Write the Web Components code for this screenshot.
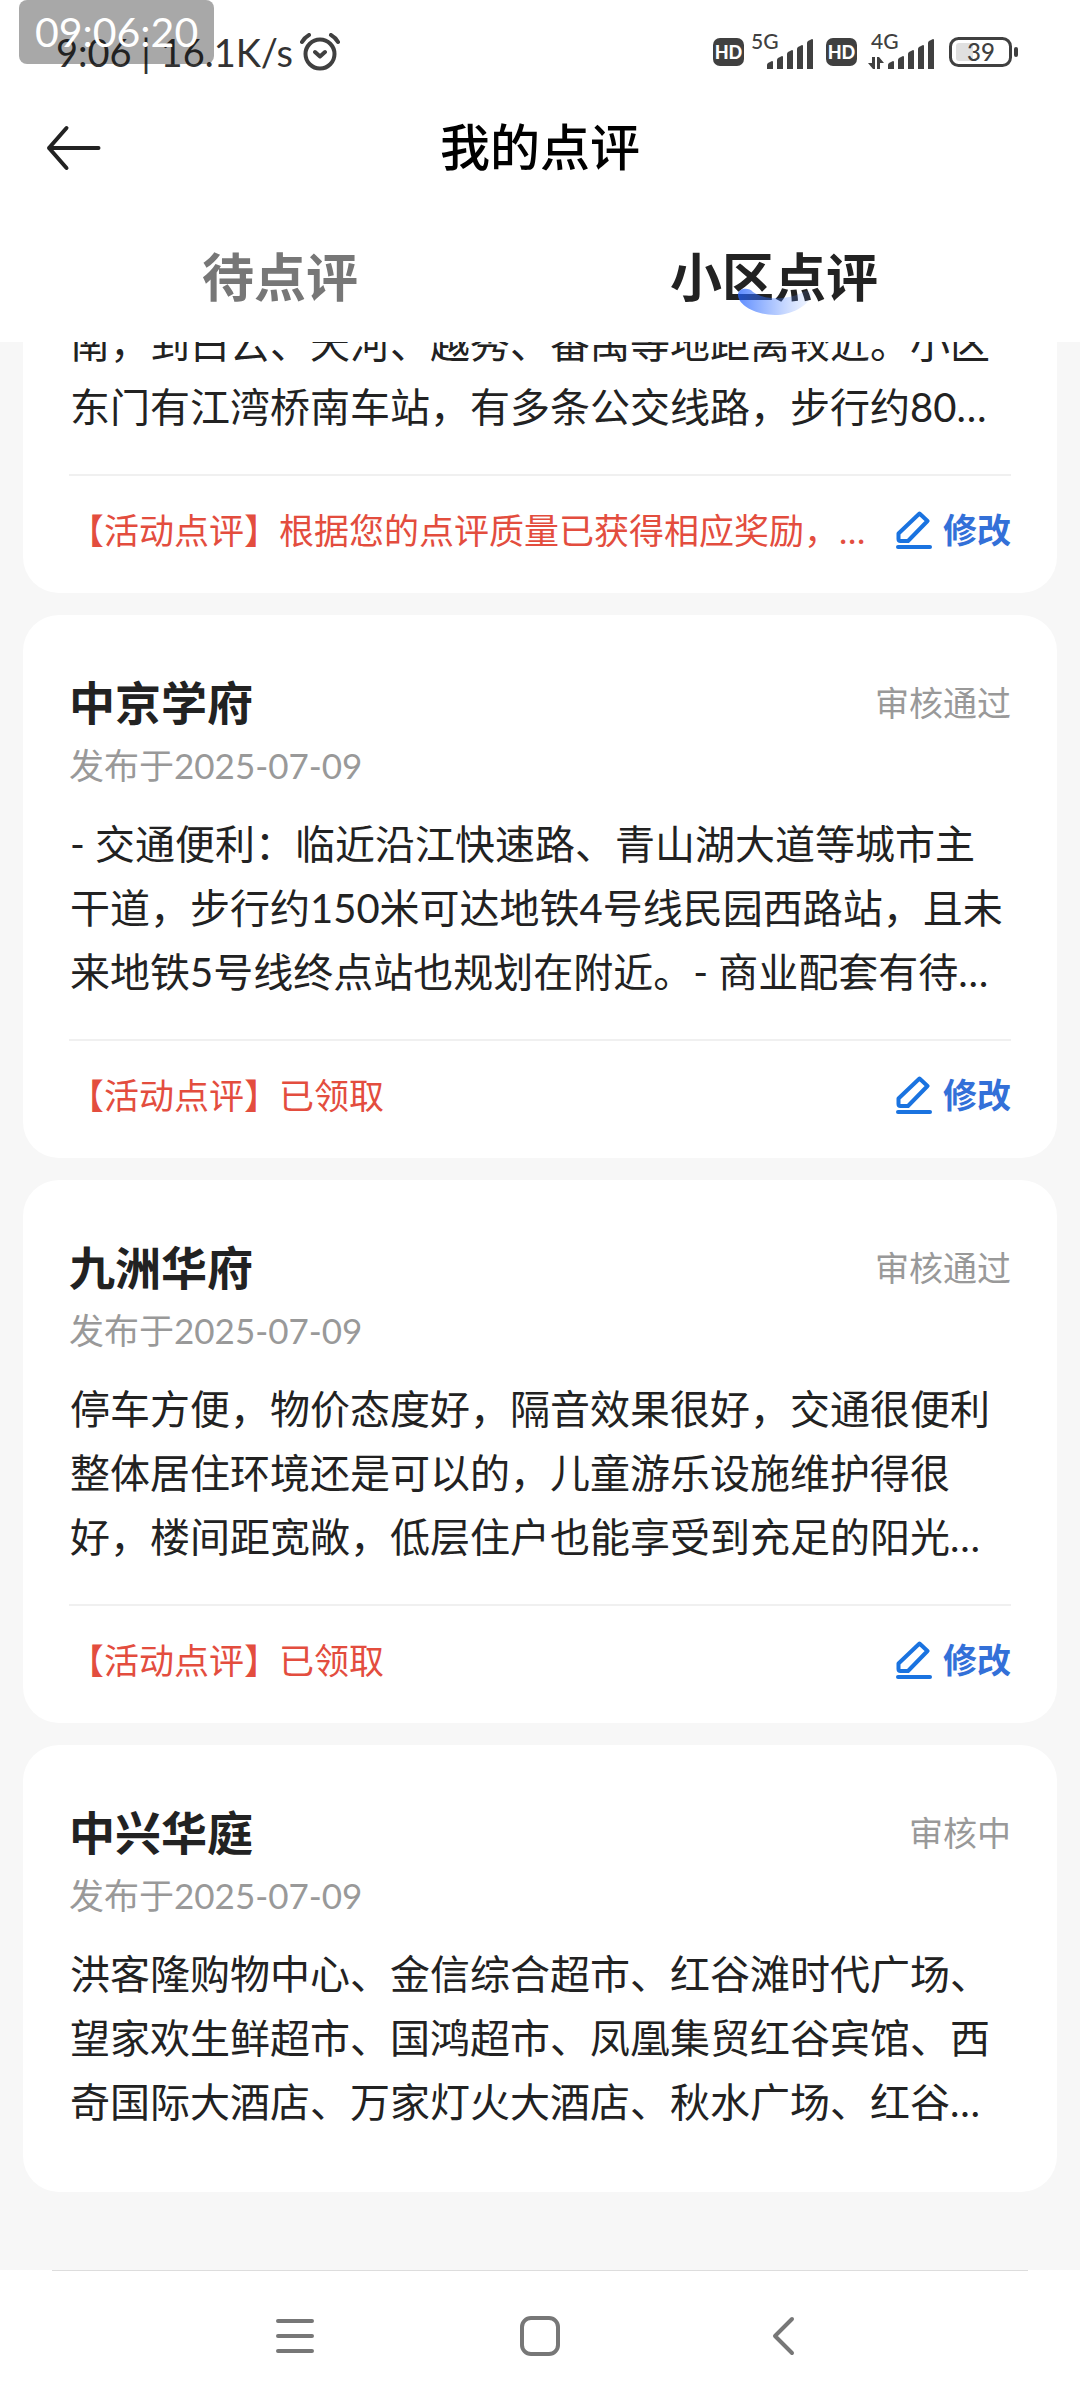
<!DOCTYPE html>
<html lang="zh-CN">
<head>
<meta charset="utf-8">
<meta name="viewport" content="width=device-width, initial-scale=1">
<title>我的点评</title>
<style>
  html, body { margin: 0; }
  body {
    background: #fff;
    color: #222;
    font-family: Lato, "Noto Sans CJK SC", sans-serif;
  }
</style>
</head>
<body>
<app-shell>
  <status-bar slot="header" time="9:06" speed="16.1K/s" battery="39"></status-bar>
  <title-bar slot="header">我的点评</title-bar>
  <tab-strip slot="header">
    <tab-item>待点评</tab-item>
    <tab-item selected>小区点评</tab-item>
  </tab-strip>

  <review-card continued editable>
    南，到白云、天河、越秀、番禺等地距离较近。小区东门有江湾桥南车站，有多条公交线路，步行约80…
    <span slot="notice">【活动点评】根据您的点评质量已获得相应奖励，…</span>
  </review-card>

  <review-card editable>
    <span slot="name">中京学府</span>
    <span slot="status">审核通过</span>
    <time slot="date" datetime="2025-07-09">发布于2025-07-09</time>
    - 交通便利：临近沿江快速路、青山湖大道等城市主干道，步行约150米可达地铁4号线民园西路站，且未来地铁5号线终点站也规划在附近。- 商业配套有待…
    <span slot="notice">【活动点评】已领取</span>
  </review-card>

  <review-card editable>
    <span slot="name">九洲华府</span>
    <span slot="status">审核通过</span>
    <time slot="date" datetime="2025-07-09">发布于2025-07-09</time>
    停车方便，物价态度好，隔音效果很好，交通很便利整体居住环境还是可以的，儿童游乐设施维护得很好，楼间距宽敞，低层住户也能享受到充足的阳光…
    <span slot="notice">【活动点评】已领取</span>
  </review-card>

  <review-card>
    <span slot="name">中兴华庭</span>
    <span slot="status">审核中</span>
    <time slot="date" datetime="2025-07-09">发布于2025-07-09</time>
    洪客隆购物中心、金信综合超市、红谷滩时代广场、望家欢生鲜超市、国鸿超市、凤凰集贸红谷宾馆、西奇国际大酒店、万家灯火大酒店、秋水广场、红谷…
  </review-card>

  <system-nav slot="footer"></system-nav>
  <clock-overlay slot="overlay">09:06:20</clock-overlay>
</app-shell>

<script>
const define = (name, render) => customElements.define(name, class extends HTMLElement {
  constructor() {
    super();
    this.attachShadow({ mode: 'open' });
  }
  connectedCallback() {
    this.shadowRoot.innerHTML = render(this);
  }
});

const buttonReset = `
  button {
    margin: 0; padding: 0; border: 0; background: none;
    font: inherit; color: inherit; cursor: pointer;
  }
  svg { display: block; }
`;

/* Page frame: fixed header and footer, list scrolled to its end between them */
define('app-shell', () => `
  <style>
    :host { display: flex; flex-direction: column; height: 100vh; position: relative; background: #fff; }
    header, footer { flex: none; background: #fff; }
    main {
      flex: 1; min-height: 0; overflow: hidden;
      display: flex; flex-direction: column; justify-content: flex-end; gap: 22px;
      padding: 0 23px 78px; background: #f7f7f7;
    }
  </style>
  <header><slot name="header"></slot></header>
  <main><slot></slot></main>
  <footer><slot name="footer"></slot></footer>
  <slot name="overlay"></slot>
`);

define('clock-overlay', () => `
  <style>
    :host {
      position: absolute; top: 0; left: 19px; padding: 0 16px;
      border-radius: 8px; background: rgba(0, 0, 0, .34); color: #fff;
      font-size: 41px; line-height: 64px;
    }
  </style>
  <slot></slot>
`);

define('hd-badge', () => `
  <style>
    :host {
      display: block; width: 31px; height: 28px; border-radius: 7px;
      background: #404040; color: #fff; text-align: center;
      font: 900 18px/28px Lato, sans-serif;
    }
  </style>HD
`);

define('signal-meter', el => {
  const data = el.hasAttribute('data');
  const right = data ? 71 : 63;
  const width = data ? 78 : 68;
  const bars = [8, 13, 19, 24, 30].map((h, i) => {
    const x = right - 47 + i * 10;
    const w = 6;
    return `<path d="M${x} ${42}v${-h + 4}q0-1 1-2l${w - 2}-2q1 0 1 1v${h - 1}z"/>`;
  }).join('');
  const arrows = data ? '<path d="M11 30v12h-2l-5-6h4v-6zM13 42V30h2l5 6h-4v6z"/>' : '';
  return `
    <style>
      :host { display: block; }
      svg { display: block; overflow: visible; fill: #404040; }
      text { font: 500 21px Lato, sans-serif; }
    </style>
    <svg width="${width}" height="50" viewBox="0 0 ${width} 50" role="img" aria-label="${el.getAttribute('network')}">
      <text x="${data ? 7 : 0}" y="22">${el.getAttribute('network')}</text>${bars}${arrows}
    </svg>`;
});

define('battery-meter', el => `
  <style>
    :host { display: block; }
    svg { display: block; }
    text { font: 500 24px Lato, sans-serif; fill: #404040; }
  </style>
  <svg width="69" height="30" viewBox="0 0 69 30" role="img" aria-label="${el.getAttribute('level')}%">
    <rect x="7" y="6" width="17" height="18" rx="3" fill="#e0e0e0"/>
    <rect x="1.5" y="1.5" width="60" height="27" rx="8" fill="none" stroke="#404040" stroke-width="3"/>
    <rect x="65" y="10" width="4" height="10" rx="2" fill="#404040"/>
    <text x="32" y="24" text-anchor="middle">${el.getAttribute('level')}</text>
  </svg>
`);

define('status-bar', el => `
  <style>
    :host {
      display: flex; align-items: center; justify-content: space-between;
      height: 104px; padding: 0 62px 0 56px; color: #333; font-size: 38px; line-height: 48px;
    }
    .left, .right { display: flex; align-items: center; gap: 7px; }
    svg { display: block; }
  </style>
  <div class="left">
    <span>${el.getAttribute('time')} | ${el.getAttribute('speed')}</span>
    <svg width="40" height="38" viewBox="0 0 40 38" fill="none" stroke="#404040" stroke-width="4" stroke-linecap="round" stroke-linejoin="round" role="img" aria-label="闹钟">
      <circle cx="20" cy="21" r="14.5"/>
      <path d="M2 9q2.500-4.500 7-7M38 9q-2.500-4.500-7-7M15 19l5 4.500 5-4.500"/>
    </svg>
  </div>
  <div class="right">
    <hd-badge></hd-badge>
    <signal-meter network="5G"></signal-meter>
    <hd-badge></hd-badge>
    <signal-meter network="4G" data></signal-meter>
    <battery-meter level="${el.getAttribute('battery')}"></battery-meter>
  </div>
`);

define('title-bar', () => `
  <style>
    :host {
      display: grid; grid-template-columns: 1fr auto 1fr; align-items: center;
      height: 86px; padding: 0 46px;
    }
    ${buttonReset}
    button { justify-self: start; }
    h1 { margin: 0; color: #000; font-size: 50px; line-height: 72px; font-weight: 500; }
  </style>
  <button type="button" aria-label="返回">
    <svg width="56" height="48" viewBox="0 0 56 48" fill="none" stroke="#222" stroke-width="4" stroke-linecap="round" stroke-linejoin="round">
      <path d="M52.500 25H3M20.500 5L3 25l17.500 20"/>
    </svg>
  </button>
  <h1><slot></slot></h1>
`);

define('tab-strip', () => `
  <style>
    :host { display: flex; height: 130px; padding: 22px 59px 0 33px; }
    ::slotted(*) { flex: 1; }
  </style>
  <slot></slot>
`);

define('tab-item', el => {
  const selected = el.hasAttribute('selected');
  return `
    <style>
      :host { display: flex; align-items: center; justify-content: center; color: ${selected ? '#222' : '#777'}; }
      ${buttonReset}
      button { position: relative; font-size: 52px; line-height: 76px; font-weight: 700; }
      svg { position: absolute; left: 50%; bottom: 0; margin-left: -37px; }
    </style>
    <button type="button" aria-pressed="${selected}"><slot></slot>${selected ? `
      <svg width="76" height="27" viewBox="0 0 76 27" aria-hidden="true">
        <defs><linearGradient id="g" x1="0" x2="1">
          <stop offset="0" stop-color="#2060ff" stop-opacity=".72"/>
          <stop offset=".5" stop-color="#3f78ff" stop-opacity=".4"/>
          <stop offset="1" stop-color="#6f9cff" stop-opacity=".08"/>
        </linearGradient></defs>
        <path d="M1 6C2 0 12-1 16 4c13 9 37 8 52-1 4-1 7 1 7 4C70 19 54 27 38 27 17 27 0 16 1 6z" fill="url(#g)"/>
      </svg>` : ''}</button>`;
});

define('review-card', el => `
  <style>
    :host { display: block; flex: none; padding: 56px 46px 0; border-radius: 36px; background: #fff; }
    ${buttonReset}
    .head { display: flex; align-items: center; justify-content: space-between; }
    h2 { margin: 0; font-size: 46px; line-height: 64px; font-weight: 700; }
    .status, .date { color: #999; font-size: 35px; line-height: 50px; }
    .status { font-size: 34px; }
    .date { margin: 5px 0 22px; }
    .body { margin: 0; padding: 0 1px; font-size: 40px; line-height: 64px; }
    .foot {
      display: flex; align-items: center; justify-content: space-between; gap: 16px;
      margin-top: 35px; padding: 29px 0 38px; border-top: 2px solid #f0f0f0;
      font-size: 35px; line-height: 50px;
    }
    .notice { color: #e34d3e; white-space: nowrap; overflow: hidden; }
    .edit { display: flex; align-items: center; gap: 11px; flex: none; color: #3370d8; font-size: 34px; font-weight: 700; }
    .end { height: 58px; }
  </style>
  ${el.hasAttribute('continued') ? '' : `
    <div class="head"><h2><slot name="name"></slot></h2><span class="status"><slot name="status"></slot></span></div>
    <div class="date"><slot name="date"></slot></div>`}
  <p class="body"><slot></slot></p>
  ${el.hasAttribute('editable') ? `
    <div class="foot">
      <span class="notice"><slot name="notice"></slot></span>
      <button class="edit" type="button">
        <svg width="36" height="38" viewBox="0 0 36 38" fill="none" stroke="#1a73e0" stroke-width="4" stroke-linecap="round" stroke-linejoin="round" aria-hidden="true">
          <path d="M23.500 2.500l8 7.500L12 30H4.500q-2 0-2-2v-5.500z"/>
          <path d="M2 36h32"/>
        </svg>修改</button>
    </div>` : '<div class="end"></div>'}
`);

define('system-nav', () => `
  <style>
    :host { display: block; background: #fff; }
    hr { height: 1px; margin: 0 52px; border: 0; background: #ddd; }
    nav { display: flex; height: 129px; padding: 0 16%; }
    ${buttonReset}
    button { flex: 1; display: flex; align-items: center; justify-content: center; }
    svg { fill: none; stroke: #777; stroke-width: 4; stroke-linecap: round; stroke-linejoin: round; }
  </style>
  <hr>
  <nav aria-label="系统导航">
    <button type="button" aria-label="最近任务">
      <svg width="40" height="40" viewBox="0 0 40 40"><path d="M3 5h34M3 20h34M3 35h34"/></svg>
    </button>
    <button type="button" aria-label="主屏幕">
      <svg width="40" height="40" viewBox="0 0 40 40"><rect x="2" y="2" width="36" height="36" rx="9"/></svg>
    </button>
    <button type="button" aria-label="返回">
      <svg width="40" height="40" viewBox="0 0 40 40"><path d="M27 3L10 20l17 17"/></svg>
    </button>
  </nav>
`);
</script>
</body>
</html>
